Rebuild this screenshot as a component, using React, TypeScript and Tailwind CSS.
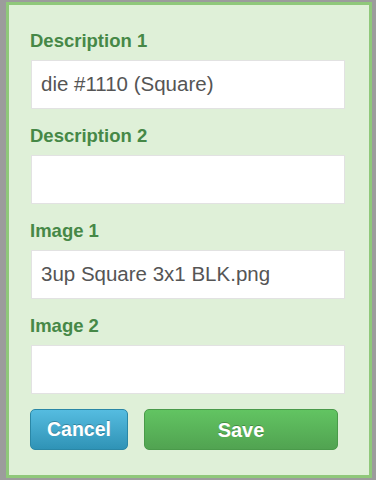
import React from 'react';

const fields = [
  { label: 'Description 1', value: 'die #1110 (Square)' },
  { label: 'Description 2', value: '' },
  { label: 'Image 1', value: '3up Square 3x1 BLK.png' },
  { label: 'Image 2', value: '' },
];

export default function App() {
  return (
    <div className="w-[376px] h-[480px] bg-[#9c9c9c] pt-[2px] pl-[6px] pr-[4px] pb-[2px] font-['Liberation_Sans',Arial,sans-serif]">
      <div className="w-[366px] h-[476px] border-[3px] border-[#8fc87a] bg-[#dff0d8] pt-[24px]">
        {fields.map((f) => (
          <div key={f.label} className="ml-[22px] w-[314px] mb-[15px]">
            <label className="block h-[24px] leading-[24px] mb-[7px] text-[18.5px] font-bold text-[#468847] -ml-px">
              {f.label}
            </label>
            <div className="h-[49px] w-[314px] bg-white border border-[#e2e2e2] flex items-center pl-[9px] text-[20.5px] text-[#555555]">
              {f.value}
            </div>
          </div>
        ))}
        <div className="flex gap-[16px] ml-[21px] mt-[1px]">
          <button className="w-[98px] h-[41px] rounded-[5px] border border-[#2a87a6] bg-gradient-to-b from-[#55bce0] to-[#2f93b6] text-white text-[19.5px] font-bold [text-shadow:0_-1px_0_rgba(0,0,0,0.25)]">
            Cancel
          </button>
          <button className="w-[194px] h-[41px] rounded-[5px] border border-[#4a9a4a] bg-gradient-to-b from-[#62c462] to-[#51a351] text-white text-[20px] font-bold [text-shadow:0_-1px_0_rgba(0,0,0,0.25)]">
            Save
          </button>
        </div>
      </div>
    </div>
  );
}
